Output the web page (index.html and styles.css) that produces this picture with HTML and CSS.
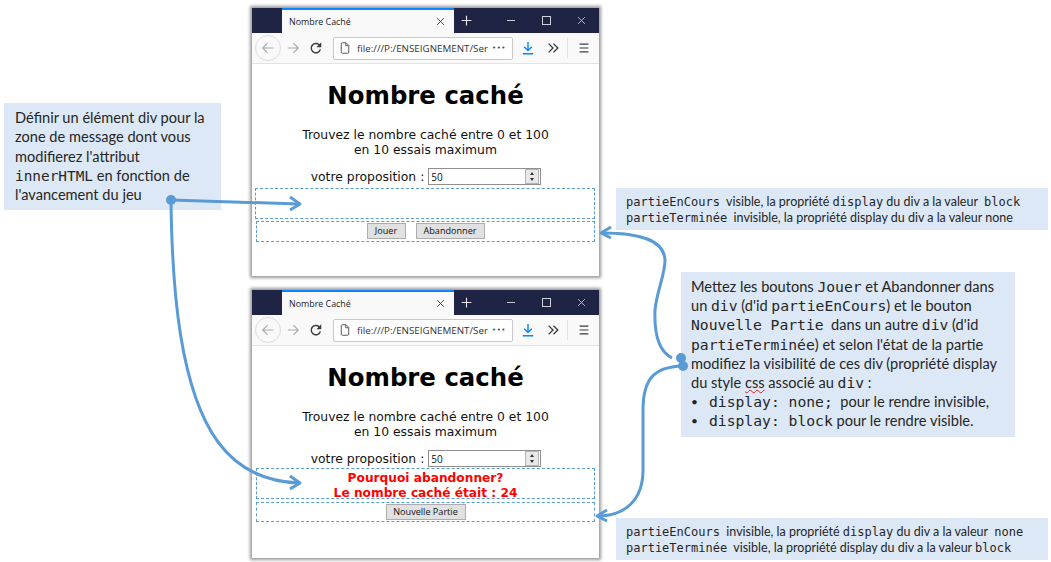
FILE: index.html
```html
<!DOCTYPE html>
<html lang="fr">
<head>
    <meta charset="UTF-8">
    <meta name="viewport" content="width=device-width, initial-scale=1.0">
    <title>Nombre caché</title>
    <link rel="stylesheet" href="styles.css">
</head>
<body>

    <!-- icons shared by both browser windows -->
    <svg class="icon-defs" width="0" height="0">
        <symbol id="i-back" viewBox="0 0 16 16"><path d="M14 8H2.5M7.5 2.5L2 8l5.5 5.5" fill="none" stroke="currentColor" stroke-width="1.3"/></symbol>
        <symbol id="i-forward" viewBox="0 0 16 16"><path d="M2 8h11.5M8.5 2.5L14 8l-5.500 5.500" fill="none" stroke="currentColor" stroke-width="1.300"/></symbol>
        <symbol id="i-reload" viewBox="0 0 16 16"><path d="M13 9.500A5.300 5.300 0 1 1 11.500 4.200L13.500 6" fill="none" stroke="currentColor" stroke-width="1.600"/><path d="M14 1.500v5.500H8.500z" fill="currentColor"/></symbol>
        <symbol id="i-page" viewBox="0 0 16 16"><path d="M3 2.500A1.500 1.500 0 0 1 4.500 1H9.500L13 4.500V13.500A1.500 1.500 0 0 1 11.500 15H4.500A1.500 1.500 0 0 1 3 13.500zM9 1.500V5H12.500" fill="none" stroke="currentColor" stroke-width="1.200"/></symbol>
        <symbol id="i-download" viewBox="0 0 16 16"><path d="M8 1v9.500M3.500 6.500L8 11l4.500-4.500M2 14.500h12" fill="none" stroke="currentColor" stroke-width="1.600"/></symbol>
        <symbol id="i-more" viewBox="0 0 16 16"><path d="M3 3l5 5-5 5M8.500 3l5 5-5 5" fill="none" stroke="currentColor" stroke-width="1.600"/></symbol>
        <symbol id="i-menu" viewBox="0 0 16 16"><path d="M3 3.500h10M3 8h10M3 12.500h10" fill="none" stroke="currentColor" stroke-width="1.400"/></symbol>
        <symbol id="i-close" viewBox="0 0 12 12"><path d="M1.500 1.500l9 9M10.500 1.500l-9 9" fill="none" stroke="currentColor" stroke-width="1.200"/></symbol>
        <symbol id="i-plus" viewBox="0 0 16 16"><path d="M8 2v12M2 8h12" fill="none" stroke="currentColor" stroke-width="1.400"/></symbol>
    </svg>

    <main class="canvas">

        <div class="window window-top">
            <div class="tabstrip">
                <div class="tab">
                    <span class="tab-title">Nombre Caché</span>
                    <svg class="tab-close"><use href="#i-close"/></svg>
                </div>
                <svg class="tab-new"><use href="#i-plus"/></svg>
                <div class="win-controls">
                    <span class="win-min"></span>
                    <span class="win-max"></span>
                    <svg class="win-close"><use href="#i-close"/></svg>
                </div>
            </div>
            <div class="toolbar">
                <span class="back-btn"><svg><use href="#i-back"/></svg></span>
                <svg class="tool tool-forward"><use href="#i-forward"/></svg>
                <svg class="tool tool-reload"><use href="#i-reload"/></svg>
                <div class="urlbar">
                    <svg class="url-page"><use href="#i-page"/></svg>
                    <span class="url-text">file:///P:/ENSEIGNEMENT/Ser</span>
                    <span class="url-dots">•••</span>
                </div>
                <svg class="tool tool-download"><use href="#i-download"/></svg>
                <svg class="tool tool-more"><use href="#i-more"/></svg>
                <span class="tool-sep"></span>
                <svg class="tool tool-menu"><use href="#i-menu"/></svg>
            </div>
            <div class="page">
                <h1>Nombre caché</h1>
                <p class="intro">Trouvez le nombre caché entre 0 et 100<br>en 10 essais maximum</p>
                <div class="guess">
                    <span>votre proposition :</span>
                    <div class="number-input">
                        <span class="number-value">50</span>
                        <span class="spinner"><i class="up"></i><i class="down"></i></span>
                    </div>
                </div>
                <div class="zone message message-empty"></div>
                <div class="zone actions actions-top">
                    <button class="btn btn-play">Jouer</button>
                    <button class="btn btn-quit">Abandonner</button>
                </div>
            </div>
        </div>

        <div class="window window-bottom">
            <div class="tabstrip">
                <div class="tab">
                    <span class="tab-title">Nombre Caché</span>
                    <svg class="tab-close"><use href="#i-close"/></svg>
                </div>
                <svg class="tab-new"><use href="#i-plus"/></svg>
                <div class="win-controls">
                    <span class="win-min"></span>
                    <span class="win-max"></span>
                    <svg class="win-close"><use href="#i-close"/></svg>
                </div>
            </div>
            <div class="toolbar">
                <span class="back-btn"><svg><use href="#i-back"/></svg></span>
                <svg class="tool tool-forward"><use href="#i-forward"/></svg>
                <svg class="tool tool-reload"><use href="#i-reload"/></svg>
                <div class="urlbar">
                    <svg class="url-page"><use href="#i-page"/></svg>
                    <span class="url-text">file:///P:/ENSEIGNEMENT/Ser</span>
                    <span class="url-dots">•••</span>
                </div>
                <svg class="tool tool-download"><use href="#i-download"/></svg>
                <svg class="tool tool-more"><use href="#i-more"/></svg>
                <span class="tool-sep"></span>
                <svg class="tool tool-menu"><use href="#i-menu"/></svg>
            </div>
            <div class="page">
                <h1>Nombre caché</h1>
                <p class="intro">Trouvez le nombre caché entre 0 et 100<br>en 10 essais maximum</p>
                <div class="guess">
                    <span>votre proposition :</span>
                    <div class="number-input">
                        <span class="number-value">50</span>
                        <span class="spinner"><i class="up"></i><i class="down"></i></span>
                    </div>
                </div>
                <div class="zone message message-lost">Pourquoi abandonner?<br>Le nombre caché était : 24</div>
                <div class="zone actions actions-bottom">
                    <button class="btn btn-new">Nouvelle Partie</button>
                </div>
            </div>
        </div>

        <div class="note note-message">
            Définir un élément div pour la<br>
            zone de message dont vous<br>
            modifierez l'attribut<br>
            <code>innerHTML</code> en fonction de<br>
            l'avancement du jeu
        </div>

        <div class="note note-state note-state-top">
            <code>partieEnCours</code>&nbsp; visible, la propriété <code>display</code> du div a la valeur&nbsp; <code>block</code><br>
            <code>partieTerminée</code>&nbsp; invisible, la propriété display du div a la valeur none
        </div>

        <div class="note note-main">
            Mettez les boutons <code>Jouer</code> et Abandonner dans<br>
            un <code>div</code> (d'id <code>partieEnCours</code>) et le bouton<br>
            <code>Nouvelle Partie</code>&nbsp; dans un autre <code>div</code> (d'id<br>
            <code>partieTerminée</code>) et selon l'état de la partie<br>
            modifiez la visibilité de ces div (propriété display<br>
            du style <span class="typo">css</span> associé au <code>div</code> :
            <ul>
                <li><code>display: none;</code>&nbsp; pour le rendre invisible,</li>
                <li><code>display: block</code> pour le rendre visible.</li>
            </ul>
        </div>

        <div class="note note-state note-state-bottom">
            <code>partieEnCours</code>&nbsp; invisible, la propriété <code>display</code> du div a la valeur&nbsp; <code>none</code><br>
            <code>partieTerminée</code>&nbsp; visible, la propriété display du div a la valeur <code>block</code>
        </div>

        <!-- connectors drawn over everything -->
        <svg class="arrows" viewBox="0 0 1051 562">
            <g fill="none" stroke="#5b9bd5" stroke-width="3" stroke-linejoin="round">
                <path d="M171 200 L299 204"/>
                <path d="M290 197 L300 204 L290 210"/>
                <path d="M171 200 C172 290 180 390 218 442 C240 472 270 482 299 483"/>
                <path d="M290 476 L300 483 L290 489"/>
                <path d="M672 358 C660 352 654 335 655 310 C657 290 665 275 665 260 C664 240 640 233 602 233"/>
                <path d="M611 227 L601 233 L611 238"/>
                <path d="M682 366 C655 367 643 378 643 410 L643 470 C643 500 625 516 598 516"/>
                <path d="M607 510 L597 516 L607 521"/>
            </g>
            <g fill="#5b9bd5">
                <circle cx="171" cy="200" r="5"/>
                <circle cx="681" cy="358" r="5"/>
                <circle cx="683" cy="366" r="5"/>
            </g>
        </svg>

    </main>

</body>
</html>
```

FILE: styles.css
```css
body {
    margin: 0;
    background: #fff;
    font-family: 'DejaVu Sans', sans-serif;
    color: #111;
}

.icon-defs {
    position: absolute;
}

.canvas {
    position: relative;
    width: 1051px;
    height: 562px;
    overflow: hidden;
}

/* Browser windows */
.window {
    position: absolute;
    left: 252px;
    width: 347px;
    height: 268px;
    display: flex;
    flex-direction: column;
    background: #fff;
    box-shadow: 0 0 3px 2px #9a9a9a;
}

.window-top {
    top: 8px;
}

.window-bottom {
    top: 290px;
}

.tabstrip {
    height: 25px;
    flex: none;
    display: flex;
    align-items: center;
    padding-left: 30px;
    background: #1f2344;
}

.tab {
    width: 172px;
    height: 25px;
    box-sizing: border-box;
    display: flex;
    align-items: center;
    padding: 0 9px 0 7px;
    background: #f9f9fa;
    border-top: 2px solid #0a84ff;
}

.tab-title {
    flex: 1;
    font-family: 'Open Sans', sans-serif;
    font-size: 8.9px;
    color: #222;
}

.tab-close {
    width: 9px;
    height: 9px;
    color: #333;
}

.tab-new {
    width: 13px;
    height: 13px;
    margin-left: 6px;
    color: #e6e6ec;
}

.win-controls {
    display: flex;
    align-items: center;
    margin-left: 34px;
    color: #c8c8d2;
}

.win-min {
    width: 8px;
    height: 1px;
    background: #c8c8d2;
}

.win-max {
    width: 7px;
    height: 7px;
    margin-left: 27px;
    border: 1px solid #d0d0da;
}

.win-close {
    width: 9px;
    height: 9px;
    margin-left: 26px;
}

.toolbar {
    height: 31px;
    flex: none;
    box-sizing: border-box;
    display: flex;
    align-items: center;
    padding-left: 3px;
    background: #f9f9fa;
    border-bottom: 1px solid #e3e3e6;
    color: #3c3c40;
}

.back-btn {
    width: 24px;
    height: 24px;
    flex: none;
    display: flex;
    align-items: center;
    justify-content: center;
    border: 1px solid #dcdcdf;
    border-radius: 50%;
    color: #a9a9ad;
}

.back-btn svg {
    width: 14px;
    height: 14px;
}

.tool {
    width: 14px;
    height: 14px;
    flex: none;
}

.tool-forward {
    margin-left: 5px;
    color: #a9a9ad;
}

.tool-reload {
    margin-left: 9px;
}

.urlbar {
    width: 180px;
    height: 23px;
    flex: none;
    box-sizing: border-box;
    display: flex;
    align-items: center;
    margin-left: 10px;
    padding: 0 5px 0 5px;
    background: #fff;
    border: 1px solid #c9c9cc;
    border-radius: 2px;
    overflow: hidden;
}

.url-page {
    width: 12px;
    height: 12px;
    flex: none;
    color: #4a4a4f;
}

.url-text {
    width: 131px;
    flex: none;
    margin-left: 6px;
    overflow: hidden;
    white-space: nowrap;
    font-family: 'Open Sans', sans-serif;
    font-size: 9.8px;
    color: #333;
}

.url-dots {
    margin-left: 4px;
    font-size: 7px;
    letter-spacing: 0.5px;
    color: #4a4a4f;
}

.tool-download {
    margin-left: 8px;
    color: #0a84ff;
}

.tool-more {
    margin-left: 11px;
}

.tool-sep {
    width: 1px;
    height: 20px;
    margin-left: 7px;
    background: #e3e3e6;
}

.tool-menu {
    margin-left: 9px;
}

/* Page inside the window */
.page {
    flex: 1;
    padding-top: 16px;
    text-align: center;
}

.page h1 {
    margin: 0 0 16px;
    font-size: 24.4px;
    line-height: 32px;
    font-weight: bold;
    color: #000;
}

.intro {
    margin: 0 0 10px;
    font-size: 12.35px;
    line-height: 15px;
}

.guess {
    display: flex;
    justify-content: center;
    align-items: center;
    gap: 4px;
    height: 17px;
    font-size: 12.4px;
    padding-left: 1px;
}

.number-input {
    width: 113px;
    height: 17px;
    box-sizing: border-box;
    display: flex;
    align-items: center;
    justify-content: space-between;
    padding: 0 1px 0 2px;
    border: 1px solid #8f8f8f;
    text-align: left;
}

.number-value {
    font-family: 'Open Sans', sans-serif;
    font-size: 10px;
}

.spinner {
    width: 12px;
    height: 13px;
    display: flex;
    flex-direction: column;
    align-items: center;
    justify-content: space-around;
    background: #e8e8e8;
    border: 1px solid #b5b5b5;
}

.spinner i {
    width: 0;
    height: 0;
    border-left: 2.5px solid transparent;
    border-right: 2.5px solid transparent;
}

.spinner .up {
    border-bottom: 3px solid #333;
}

.spinner .down {
    border-top: 3px solid #333;
}

.zone {
    box-sizing: border-box;
    border: 1px dashed #5b9bd5;
}

.message-empty {
    height: 31px;
    margin: 3px 4px 0 3px;
}

.message-lost {
    height: 31px;
    margin: 1px 4px 0 4px;
    padding-top: 2px;
    font-size: 12.2px;
    font-weight: bold;
    line-height: 15px;
    color: #f00;
}

.actions {
    display: flex;
    justify-content: center;
    align-items: flex-start;
    gap: 10px;
    margin-right: 4px;
    margin-left: 4px;
}

.actions-top {
    height: 21px;
    margin-top: 2px;
    padding-top: 1px;
}

.actions-bottom {
    height: 20px;
    margin-top: 3px;
    padding-top: 1px;
}

.btn {
    height: 16px;
    padding: 0;
    background: #e1e1e1;
    border: 1px solid #adadad;
    font-family: 'Open Sans', sans-serif;
    font-size: 9.1px;
    line-height: 14px;
    color: #111;
}

.btn-play {
    width: 39px;
}

.btn-quit {
    width: 69px;
}

.btn-new {
    width: 80px;
}

/* Annotations */
.note {
    position: absolute;
    box-sizing: border-box;
    background: #dce8f5;
    font-family: 'Lato', sans-serif;
    color: #262626;
    white-space: nowrap;
}

/* line-height 0 so the mono font doesn't push the lines apart */
.note code {
    font-family: 'DejaVu Sans Mono', monospace;
    line-height: 0;
}

.note-message {
    left: 4px;
    top: 103px;
    width: 217px;
    height: 107px;
    padding: 5px 0 0 11px;
    font-size: 14.6px;
    line-height: 19.3px;
}

.note-message code {
    font-size: 14.4px;
}

.note-state {
    left: 616px;
    width: 432px;
    height: 42px;
    padding: 6px 0 0 10px;
    font-size: 12.5px;
    line-height: 16px;
}

.note-state code {
    font-size: 12px;
}

.note-state-top {
    top: 188px;
}

.note-state-bottom {
    top: 518px;
}

.note-main {
    left: 681px;
    top: 272px;
    width: 334px;
    height: 165px;
    padding: 5px 0 0 10px;
    font-size: 14.6px;
    line-height: 19.2px;
}

.note-main code {
    font-size: 14.7px;
}

.note-main ul {
    margin: 0;
    padding: 0;
    list-style: none;
}

.note-main li {
    padding-left: 18px;
    position: relative;
}

.note-main li::before {
    content: "•";
    position: absolute;
    left: 0;
    font-size: 12px;
}

.typo {
    text-decoration: underline wavy #e02020 1px;
}

.arrows {
    position: absolute;
    left: 0;
    top: 0;
    width: 1051px;
    height: 562px;
    pointer-events: none;
}
```
